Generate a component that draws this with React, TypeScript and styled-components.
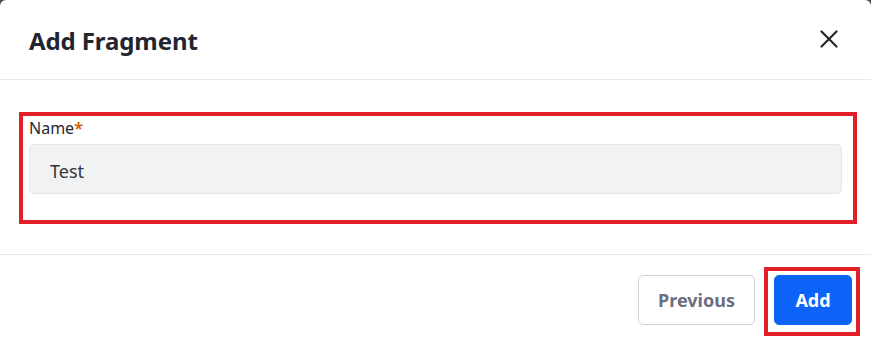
import React from "react";
import styled, { createGlobalStyle } from "styled-components";

const Global = createGlobalStyle`
  html, body { margin: 0; padding: 0; }
  body {
    background: #4a4a4a;
    font-family: "Noto Sans", "Open Sans", Arial, sans-serif;
    overflow: hidden;
  }
`;

const Modal = styled.div`
  width: 871px;
  height: 342px;
  background: #fff;
  border-radius: 6px 6px 0 0;
  display: flex;
  flex-direction: column;
  box-sizing: border-box;
`;

const Header = styled.div`
  height: 80px;
  box-sizing: border-box;
  border-bottom: 1px solid #e9eaec;
  display: flex;
  align-items: center;
  justify-content: space-between;
  padding: 0 30px 0 29px;
`;

const Title = styled.h1`
  margin: 0;
  font-size: 24px;
  font-weight: 700;
  color: #23252e;
  letter-spacing: -0.1px;
  padding-top: 2px;
`;

const CloseButton = styled.button`
  background: none;
  border: none;
  padding: 0;
  width: 24px;
  height: 24px;
  display: flex;
  align-items: center;
  justify-content: center;
  cursor: pointer;
  color: #25272f;
  margin-bottom: 1px;
`;

const Body = styled.div`
  height: 175px;
  box-sizing: border-box;
  border-bottom: 1px solid #e9eaec;
  padding: 32px 14px 0 19px;
`;

const Highlight = styled.div`
  border: 4px solid #e21f26;
  box-sizing: border-box;
  height: 112px;
  padding: 1px 11px 0 6px;
`;

const Label = styled.label`
  display: block;
  font-size: 16px;
  line-height: 22px;
  color: #25272f;
  margin-bottom: 5px;
`;

const Required = styled.span`
  color: #d5620a;
  font-weight: 700;
`;

const Input = styled.input`
  display: block;
  width: 100%;
  box-sizing: border-box;
  height: 50px;
  background: #f1f2f4;
  border: 1px solid #e4e6e9;
  border-radius: 5px;
  padding: 3px 20px 0;
  font-family: inherit;
  font-size: 18px;
  color: #33353d;
  outline: none;
`;

const Footer = styled.div`
  flex: 1;
  display: flex;
  justify-content: flex-end;
  align-items: flex-start;
  padding: 12px 11px 0 0;
  gap: 9px;
`;

const Button = styled.button<{ $primary?: boolean }>`
  height: 50px;
  box-sizing: border-box;
  border-radius: 5px;
  font-family: inherit;
  font-size: 18px;
  font-weight: 700;
  cursor: pointer;
  padding: 0;
  background: ${(p) => (p.$primary ? "#0d63f8" : "#fff")};
  color: ${(p) => (p.$primary ? "#fff" : "#6b6e7f")};
  border: 1px solid ${(p) => (p.$primary ? "#0d63f8" : "#d0d2d6")};
`;

const PrevButton = styled(Button)`
  margin-top: 8px;
  width: 117px;
`;

const ButtonHighlight = styled.div`
  border: 4px solid #e21f26;
  padding: 4px 4px 7px 6px;
  display: flex;
`;

const AddButton = styled(Button)`
  width: 78px;
`;

export default function App() {
  return (
    <>
      <Global />
      <Modal>
        <Header>
          <Title>Add Fragment</Title>
          <CloseButton aria-label="Close">
            <svg width="18" height="18" viewBox="0 0 18 18">
              <path d="M1.5 1.5 L16.5 16.5 M16.5 1.5 L1.5 16.5" stroke="currentColor" strokeWidth="2.2" strokeLinecap="round" />
            </svg>
          </CloseButton>
        </Header>
        <Body>
          <Highlight>
            <Label>
              Name<Required>*</Required>
            </Label>
            <Input defaultValue="Test" />
          </Highlight>
        </Body>
        <Footer>
          <PrevButton>Previous</PrevButton>
          <ButtonHighlight>
            <AddButton $primary>Add</AddButton>
          </ButtonHighlight>
        </Footer>
      </Modal>
    </>
  );
}
